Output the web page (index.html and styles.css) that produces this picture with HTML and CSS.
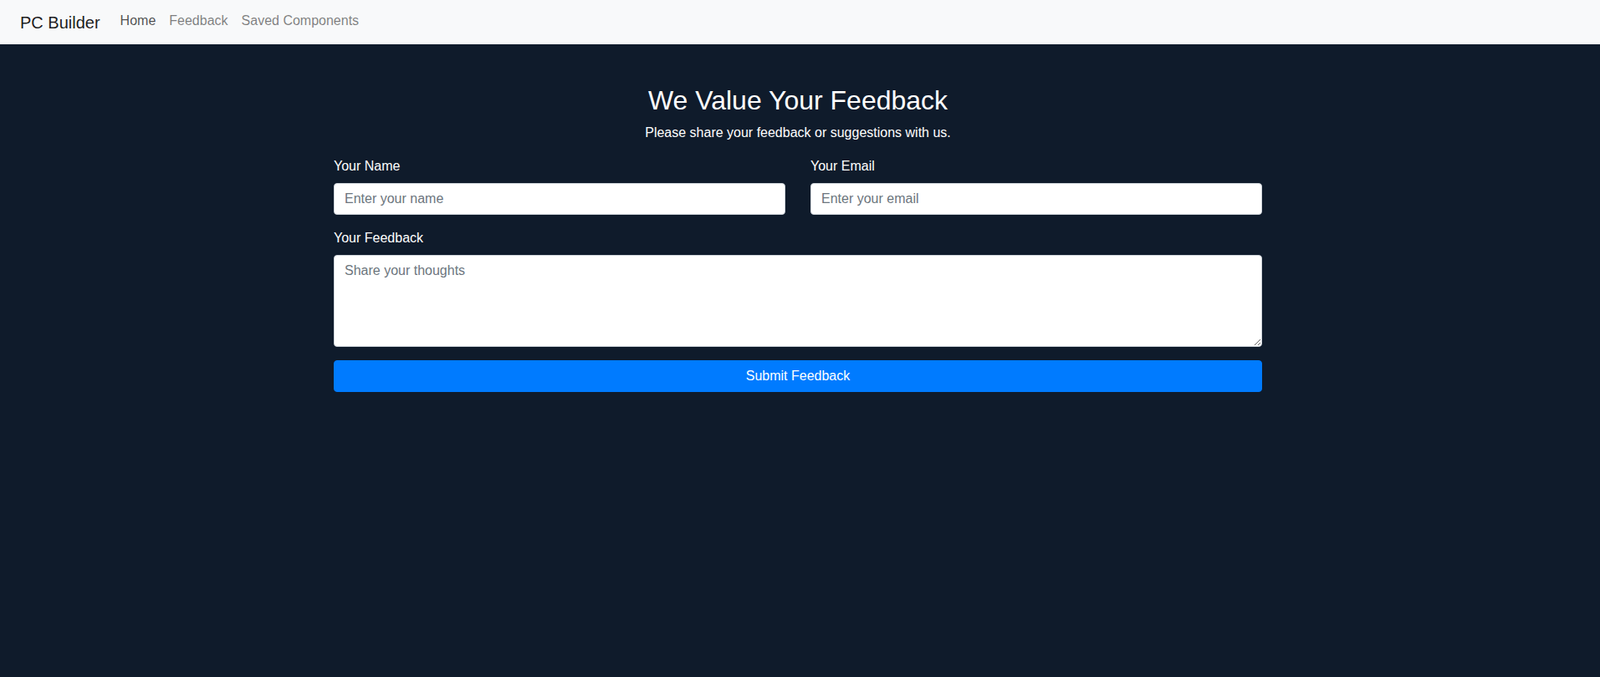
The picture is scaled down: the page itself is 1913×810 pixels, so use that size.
FILE: index.html
```html
<!DOCTYPE html>
<html lang="en">
<head>
<meta charset="utf-8">
<title>PC Builder - Feedback</title>
<link rel="stylesheet" href="styles.css">
</head>
<body>
<nav class="navbar">
  <a class="brand" href="#">PC Builder</a>
  <ul class="nav">
    <li><a class="nav-link active" href="#">Home</a></li>
    <li><a class="nav-link" href="#">Feedback</a></li>
    <li><a class="nav-link" href="#">Saved Components</a></li>
  </ul>
</nav>
<main class="page">
  <div class="container">
    <h2 class="title">We Value Your Feedback</h2>
    <p class="lead">Please share your feedback or suggestions with us.</p>
    <form class="form">
      <div class="row">
        <div class="form-group">
          <label for="name">Your Name</label>
          <input id="name" class="control" type="text" placeholder="Enter your name">
        </div>
        <div class="form-group">
          <label for="email">Your Email</label>
          <input id="email" class="control" type="email" placeholder="Enter your email">
        </div>
      </div>
      <div class="form-group">
        <label for="fb">Your Feedback</label>
        <textarea id="fb" class="control area" rows="4" placeholder="Share your thoughts"></textarea>
      </div>
      <button type="button" class="btn">Submit Feedback</button>
    </form>
  </div>
</main>
</body>
</html>
```
FILE: styles.css
```css
* { box-sizing: border-box; }
html, body { margin: 0; padding: 0; }
body {
  font-family: "Liberation Sans", Arial, sans-serif;
  font-size: 16px;
  line-height: 1.5;
  background: #0f1b2b;
  color: #ffffff;
  min-height: 810px;
}
.navbar {
  height: 53px;
  background: #f8f9fa;
  display: flex;
  align-items: center;
  padding: 0 24px;
}
.brand {
  font-size: 20px;
  line-height: 30px;
  color: rgba(0,0,0,.9);
  text-decoration: none;
  margin-right: 16px;
}
.nav {
  list-style: none;
  margin: 0;
  padding: 0;
  display: flex;
}
.nav-link {
  display: block;
  padding: 7px 8px 10px;
  line-height: 24px;
  color: rgba(0,0,0,.5);
  text-decoration: none;
}
.nav-link.active { color: rgba(0,0,0,.7); }
.page {
  padding-right: 5px;
}
.container {
  width: 1110px;
  margin: 48px auto 0;
}
.title {
  font-size: 32px;
  font-weight: 400;
  line-height: 1.2;
  margin: 0 0 8px;
  text-align: center;
}
.lead {
  margin: 0 0 16px;
  text-align: center;
}
.row {
  display: grid;
  grid-template-columns: 1fr 1fr;
  column-gap: 30px;
}
.form-group { margin-bottom: 16px; }
label {
  display: block;
  margin-bottom: 8px;
}
.control {
  display: block;
  width: 100%;
  height: 38px;
  padding: 6px 12px;
  font-family: inherit;
  font-size: 16px;
  line-height: 1.5;
  color: #495057;
  background: #fff;
  border: 1px solid #ced4da;
  border-radius: 4px;
  margin: 0;
}
.control::placeholder { color: #6c757d; opacity: 1; }
.area {
  height: 110px;
  resize: vertical;
}
.btn {
  display: block;
  width: 100%;
  height: 38px;
  padding: 6px 12px;
  font-family: inherit;
  font-size: 16px;
  line-height: 1.5;
  color: #fff;
  background: #007bff;
  border: 1px solid #007bff;
  border-radius: 4px;
  cursor: pointer;
}
```
